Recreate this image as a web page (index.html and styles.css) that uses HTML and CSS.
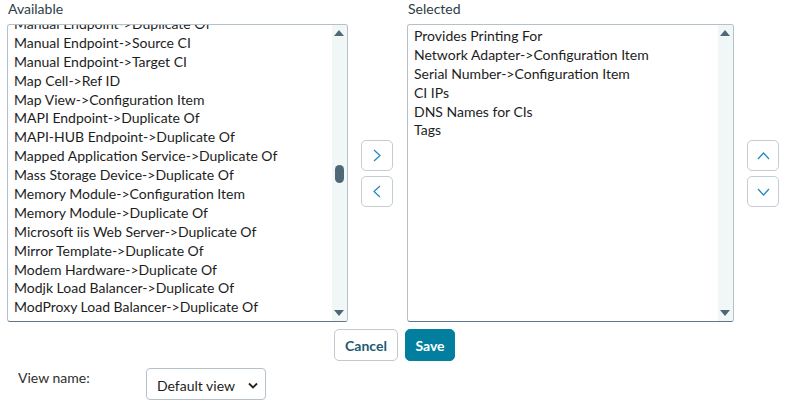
FILE: index.html
```html
<!DOCTYPE html>
<html>
<head>
<meta charset="utf-8">
<link rel="stylesheet" href="styles.css">
</head>
<body>
<div class="page">
  <div class="slush">
    <div class="col col-left">
      <div class="label">Available</div>
      <div class="box">
        <ul class="list scrolled">
          <li>Manual Endpoint-&gt;Duplicate Of</li>
          <li>Manual Endpoint-&gt;Source CI</li>
          <li>Manual Endpoint-&gt;Target CI</li>
          <li>Map Cell-&gt;Ref ID</li>
          <li>Map View-&gt;Configuration Item</li>
          <li>MAPI Endpoint-&gt;Duplicate Of</li>
          <li>MAPI-HUB Endpoint-&gt;Duplicate Of</li>
          <li>Mapped Application Service-&gt;Duplicate Of</li>
          <li>Mass Storage Device-&gt;Duplicate Of</li>
          <li>Memory Module-&gt;Configuration Item</li>
          <li>Memory Module-&gt;Duplicate Of</li>
          <li>Microsoft iis Web Server-&gt;Duplicate Of</li>
          <li>Mirror Template-&gt;Duplicate Of</li>
          <li>Modem Hardware-&gt;Duplicate Of</li>
          <li>Modjk Load Balancer-&gt;Duplicate Of</li>
          <li>ModProxy Load Balancer-&gt;Duplicate Of</li>
        </ul>
        <div class="track">
          <span class="arr arr-up"></span>
          <span class="thumb thumb-left"></span>
          <span class="arr arr-down"></span>
        </div>
      </div>
    </div>
    <div class="btncol btncol-mid">
      <button class="icon-btn" aria-label="Add">
        <svg width="8" height="13" viewBox="0 0 8 13"><polyline points="1,1 7,6.5 1,12" fill="none" stroke="#1f86c4" stroke-width="1.2"/></svg>
      </button>
      <button class="icon-btn" aria-label="Remove">
        <svg width="8" height="13" viewBox="0 0 8 13"><polyline points="7,1 1,6.5 7,12" fill="none" stroke="#1f86c4" stroke-width="1.2"/></svg>
      </button>
    </div>
    <div class="col col-right">
      <div class="label">Selected</div>
      <div class="box">
        <ul class="list sel">
          <li>Provides Printing For</li>
          <li>Network Adapter-&gt;Configuration Item</li>
          <li>Serial Number-&gt;Configuration Item</li>
          <li>CI IPs</li>
          <li>DNS Names for CIs</li>
          <li>Tags</li>
        </ul>
        <div class="track">
          <span class="arr arr-up"></span>
          <span class="arr arr-down"></span>
        </div>
      </div>
    </div>
    <div class="btncol btncol-end">
      <button class="icon-btn" aria-label="Move up">
        <svg width="13" height="8" viewBox="0 0 13 8"><polyline points="1,7 6.5,1 12,7" fill="none" stroke="#1f86c4" stroke-width="1.2"/></svg>
      </button>
      <button class="icon-btn" aria-label="Move down">
        <svg width="13" height="8" viewBox="0 0 13 8"><polyline points="1,1 6.5,7 12,1" fill="none" stroke="#1f86c4" stroke-width="1.2"/></svg>
      </button>
    </div>
  </div>
  <div class="actions">
    <button class="btn btn-cancel">Cancel</button>
    <button class="btn btn-save">Save</button>
  </div>
  <div class="viewrow">
    <label class="viewlabel">View name:</label>
    <div class="selectbox">
      <span>Default view</span>
      <svg width="10" height="7" viewBox="0 0 10 7"><polyline points="1,1.5 5,5.5 9,1.5" fill="none" stroke="#222" stroke-width="1.8"/></svg>
    </div>
  </div>
</div>
</body>
</html>
```
FILE: styles.css
```css
* { box-sizing: border-box; }
html, body { margin: 0; padding: 0; background: #fff; }
body {
  font-family: Lato, "Open Sans", Arial, sans-serif;
  font-size: 14px;
  color: #2e2e2e;
  width: 787px;
  height: 403px;
  overflow: hidden;
}
.page { padding: 0 0 0 7px; }
.slush { display: flex; align-items: flex-start; }
.col { display: flex; flex-direction: column; }
.col-left { width: 341px; }
.col-right { width: 327px; }
.label {
  height: 17px;
  line-height: 17px;
  margin-bottom: 7px;
  padding-left: 1px;
  color: #2e3d44;
}
.box {
  height: 298px;
  border: 1px solid #b4c1c8;
  border-bottom-color: #62788a;
  border-radius: 3px;
  display: flex;
  overflow: hidden;
  background: #fff;
}
.list {
  list-style: none;
  margin: 0;
  padding: 0 0 0 6px;
  flex: 1;
  color: #1d1d1d;
}
.list li { height: 18.9px; line-height: 18.9px; white-space: nowrap; }
.scrolled { margin-top: -10px; }
.sel { padding-top: 2px; }
.track {
  width: 15px;
  background: #f1f6f7;
  position: relative;
  flex: none;
}
.arr {
  position: absolute;
  left: 2px;
  width: 0; height: 0;
  border-left: 5px solid transparent;
  border-right: 5px solid transparent;
}
.arr-up { top: 5px; border-bottom: 6px solid #4f6878; }
.arr-down { bottom: 5px; border-top: 6px solid #4f6878; }
.thumb-left {
  position: absolute;
  left: 3px;
  top: 140px;
  width: 9px;
  height: 18px;
  border-radius: 5px;
  background: #4f6878;
}
.btncol {
  display: flex;
  flex-direction: column;
  gap: 5px;
  padding-top: 140px;
}
.btncol-mid { margin: 0 14px 0 13px; }
.btncol-end { margin-left: 13px; }
.icon-btn {
  width: 32px;
  height: 31px;
  border: 1px solid #c2ccd2;
  border-radius: 5px;
  background: #fff;
  display: flex;
  align-items: center;
  justify-content: center;
  padding: 0;
}
.actions {
  display: flex;
  gap: 7px;
  padding-left: 327px;
  margin-top: 7px;
}
.btn {
  height: 32px;
  border-radius: 5px;
  font-family: Lato, Arial, sans-serif;
  font-weight: bold;
  font-size: 14px;
  padding: 0;
}
.btn-cancel {
  width: 64px;
  background: #fff;
  border: 1px solid #bfc9cf;
  color: #1c5b72;
}
.btn-save {
  width: 50px;
  background: #027f9e;
  border: 1px solid #027f9e;
  color: #fff;
}
.viewrow {
  display: flex;
  align-items: flex-start;
  margin-top: 7px;
  padding-left: 11px;
}
.viewlabel {
  width: 128px;
  line-height: 17px;
  padding-top: 1px;
  color: #2e2e2e;
}
.selectbox {
  width: 120px;
  height: 32px;
  border: 1px solid #b4c1c8;
  border-radius: 4px;
  display: flex;
  align-items: center;
  justify-content: space-between;
  padding: 2px 7px 0 10px;
  color: #1d1d1d;
}
```
